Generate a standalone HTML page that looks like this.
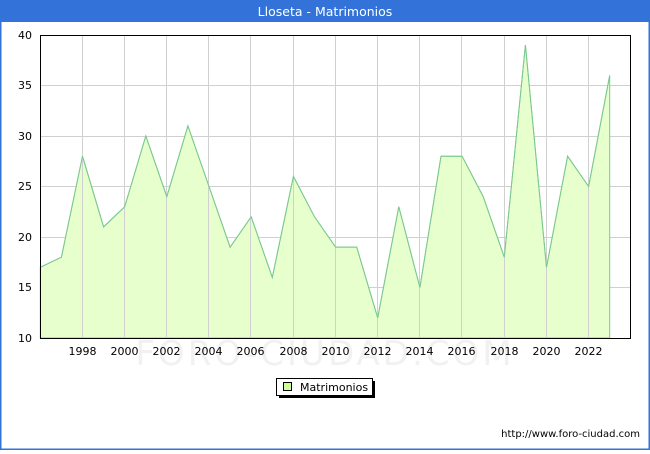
<!DOCTYPE html>
<html><head><meta charset="utf-8"><style>
body{margin:0;width:650px;height:450px;overflow:hidden;background:#fff;font-family:"DejaVu Sans","Liberation Sans",sans-serif}
</style></head><body>
<svg width="650" height="450" xmlns="http://www.w3.org/2000/svg" font-family="DejaVu Sans, Liberation Sans, sans-serif">
<rect x="0" y="0" width="650" height="450" fill="#fff"/>
<rect x="0.5" y="0.5" width="649" height="449" fill="none" stroke="#3373d9" stroke-width="2"/>
<rect x="0" y="0" width="650" height="22" fill="#3373d9"/>
<text x="325" y="16" text-anchor="middle" fill="#fff" font-size="12.5">Lloseta - Matrimonios</text>
<text x="325" y="365" text-anchor="middle" fill="#f1f1f1" font-size="34" letter-spacing="3">FORO-CIUDAD.COM</text>
<g id="grid" stroke="#d0d0d0" stroke-width="1">
<line x1="40" x2="630" y1="287.5" y2="287.5"/><line x1="40" x2="630" y1="237.5" y2="237.5"/>
<line x1="40" x2="630" y1="186.5" y2="186.5"/><line x1="40" x2="630" y1="136.5" y2="136.5"/>
<line x1="40" x2="630" y1="85.5" y2="85.5"/>
</g>
<polygon fill="#e6ffcc" stroke="#7cc98f" stroke-width="1" points="40.3,338 40.3,267.3 61.4,257.2 82.5,156.2 103.6,226.9 124.7,206.7 145.8,136 166.8,196.6 187.9,125.9 209,186.5 230.1,247.1 251.2,216.8 272.3,277.4 293.4,176.4 314.5,216.8 335.6,247.1 356.7,247.1 377.7,317.8 398.8,206.7 419.9,287.5 441,156.2 462.1,156.2 483.2,196.6 504.3,257.2 525.4,45.1 546.5,267.3 567.6,156.2 588.6,186.5 609.7,75.4 609.7,338"/>
<g stroke="#d0d0d0" stroke-width="1">
<line x1="82.5" x2="82.5" y1="35" y2="338"/><line x1="124.5" x2="124.5" y1="35" y2="338"/><line x1="166.5" x2="166.5" y1="35" y2="338"/><line x1="208.5" x2="208.5" y1="35" y2="338"/><line x1="250.5" x2="250.5" y1="35" y2="338"/><line x1="293.5" x2="293.5" y1="35" y2="338"/><line x1="335.5" x2="335.5" y1="35" y2="338"/><line x1="377.5" x2="377.5" y1="35" y2="338"/><line x1="419.5" x2="419.5" y1="35" y2="338"/><line x1="461.5" x2="461.5" y1="35" y2="338"/><line x1="504.5" x2="504.5" y1="35" y2="338"/><line x1="546.5" x2="546.5" y1="35" y2="338"/><line x1="588.5" x2="588.5" y1="35" y2="338"/>
</g>
<polyline fill="none" stroke="#7cc98f" stroke-width="1" points="40.3,267.3 61.4,257.2 82.5,156.2 103.6,226.9 124.7,206.7 145.8,136 166.8,196.6 187.9,125.9 209,186.5 230.1,247.1 251.2,216.8 272.3,277.4 293.4,176.4 314.5,216.8 335.6,247.1 356.7,247.1 377.7,317.8 398.8,206.7 419.9,287.5 441,156.2 462.1,156.2 483.2,196.6 504.3,257.2 525.4,45.1 546.5,267.3 567.6,156.2 588.6,186.5 609.7,75.4"/>
<rect x="40.5" y="35.5" width="590" height="303" fill="none" stroke="#000" stroke-width="1"/>
<g font-size="11" fill="#000" text-anchor="end">
<text x="32" y="342">10</text><text x="32" y="291">15</text><text x="32" y="241">20</text><text x="32" y="190">25</text><text x="32" y="140">30</text><text x="32" y="89">35</text><text x="32" y="39">40</text>
</g>
<g font-size="11" fill="#000" text-anchor="middle">
<text x="82.5" y="355">1998</text><text x="124.5" y="355">2000</text><text x="166.5" y="355">2002</text><text x="208.5" y="355">2004</text><text x="250.5" y="355">2006</text><text x="293.5" y="355">2008</text><text x="335.5" y="355">2010</text><text x="377.5" y="355">2012</text><text x="419.5" y="355">2014</text><text x="461.5" y="355">2016</text><text x="504.5" y="355">2018</text><text x="546.5" y="355">2020</text><text x="588.5" y="355">2022</text>
</g>
<rect x="279" y="381" width="96" height="17" fill="#000"/>
<rect x="276.5" y="378.5" width="96" height="17" fill="#fff" stroke="#000" stroke-width="1"/>
<rect x="283.5" y="382.5" width="8" height="8" fill="#ccff99" stroke="#000" stroke-width="1"/>
<text x="300" y="391" font-size="11" fill="#000">Matrimonios</text>
<text x="640" y="437" text-anchor="end" font-size="10" fill="#000">http://www.foro-ciudad.com</text>
</svg>
</body></html>
